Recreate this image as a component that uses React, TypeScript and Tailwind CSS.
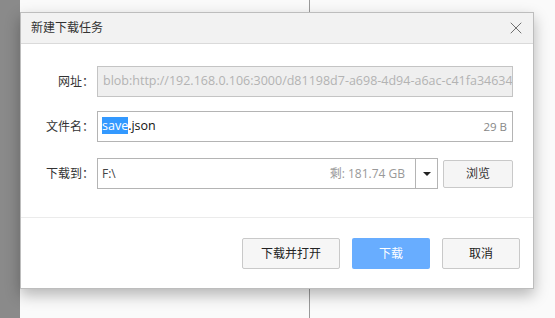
import { X } from 'lucide-react';

const font = { fontFamily: '"Open Sans", "Noto Sans CJK SC", sans-serif' };

function Row({ label, children }: { label: string; children: React.ReactNode }) {
  return (
    <div className="flex items-center">
      <div className="w-[76px] pr-[3px] text-right text-[12px] text-[#333]">{label}</div>
      {children}
    </div>
  );
}

export default function App() {
  return (
    <div className="relative w-[555px] h-[318px] overflow-hidden bg-white" style={font}>
      {/* page behind the modal */}
      <div className="flex h-full">
        <div className="w-[20px] shrink-0 bg-[#8a8a8a]" />
        <div className="w-[290px] shrink-0 border-r border-[#9a9a9a] bg-[#fafafa]" />
        <div className="flex-1 bg-[#fafafa]" />
      </div>

      {/* dialog */}
      <div className="absolute left-[20px] top-[12px] w-[514px] h-[277px] flex flex-col bg-white border border-[#bdbdbd] shadow-[0_6px_14px_rgba(0,0,0,0.28)]">
        <div className="h-[31px] shrink-0 flex items-center justify-between pl-[10px] pr-[7px] bg-[#f2f2f2] border-b border-[#dadada]">
          <span className="text-[12px] text-[#333]">新建下载任务</span>
          <X size={20} strokeWidth={1} className="text-[#555]" />
        </div>

        <div className="flex flex-col gap-[14px] pt-[22px] pr-[20px]">
          <Row label="网址：">
            <div className="flex-1 h-[31px] flex items-center px-[5px] bg-[#efefef] border border-[#c4c4c4] overflow-hidden">
              <span className="text-[12.5px] text-[#b3b3b3] whitespace-nowrap">
                blob:http://192.168.0.106:3000/d81198d7-a698-4d94-a6ac-c41fa34634d7
              </span>
            </div>
          </Row>
          <Row label="文件名：">
            <div className="flex-1 h-[31px] flex items-center justify-between px-[4px] bg-white border border-[#b4b4b4]">
              <span className="text-[12.5px] text-[#111]">
                <span className="bg-[#3399ff] text-white">save</span>.json
              </span>
              <span className="text-[11.5px] text-[#888] pr-[1px]">29 B</span>
            </div>
          </Row>
          <div className="flex items-center mt-[2px]">
            <div className="w-[76px] pr-[3px] text-right text-[12px] text-[#333]">下载到：</div>
            <div className="w-[341px] h-[31px] flex items-center bg-white border border-[#b4b4b4]">
              <span className="flex-1 px-[4px] text-[12px] text-[#444]">F:\</span>
              <span className="pr-[10px] text-[12px] text-[#999]">剩: 181.74 GB</span>
              <div className="w-[22px] h-full flex items-center justify-center border-l border-[#b4b4b4]">
                <div className="w-0 h-0 border-l-[4px] border-r-[4px] border-t-[4px] border-l-transparent border-r-transparent border-t-[#222]" />
              </div>
            </div>
            <button className="ml-[5px] w-[70px] h-[28px] text-[12px] text-[#333] bg-[#f5f5f5] border border-[#c9c9c9] rounded-[2px]">
              浏览
            </button>
          </div>
        </div>

        <div className="mt-[28px] border-t border-[#ebebeb]" />

        <div className="flex justify-end gap-[12px] pt-[20px] pr-[13px]">
          <button className="w-[98px] h-[31px] text-[12px] text-[#222] bg-[#f6f6f6] border border-[#c9c9c9] rounded-[2px]">
            下载并打开
          </button>
          <button className="w-[78px] h-[31px] text-[12px] text-white bg-[#68adff] rounded-[2px]">下载</button>
          <button className="w-[78px] h-[31px] text-[12px] text-[#222] bg-[#f6f6f6] border border-[#c9c9c9] rounded-[2px]">
            取消
          </button>
        </div>
      </div>
    </div>
  );
}
